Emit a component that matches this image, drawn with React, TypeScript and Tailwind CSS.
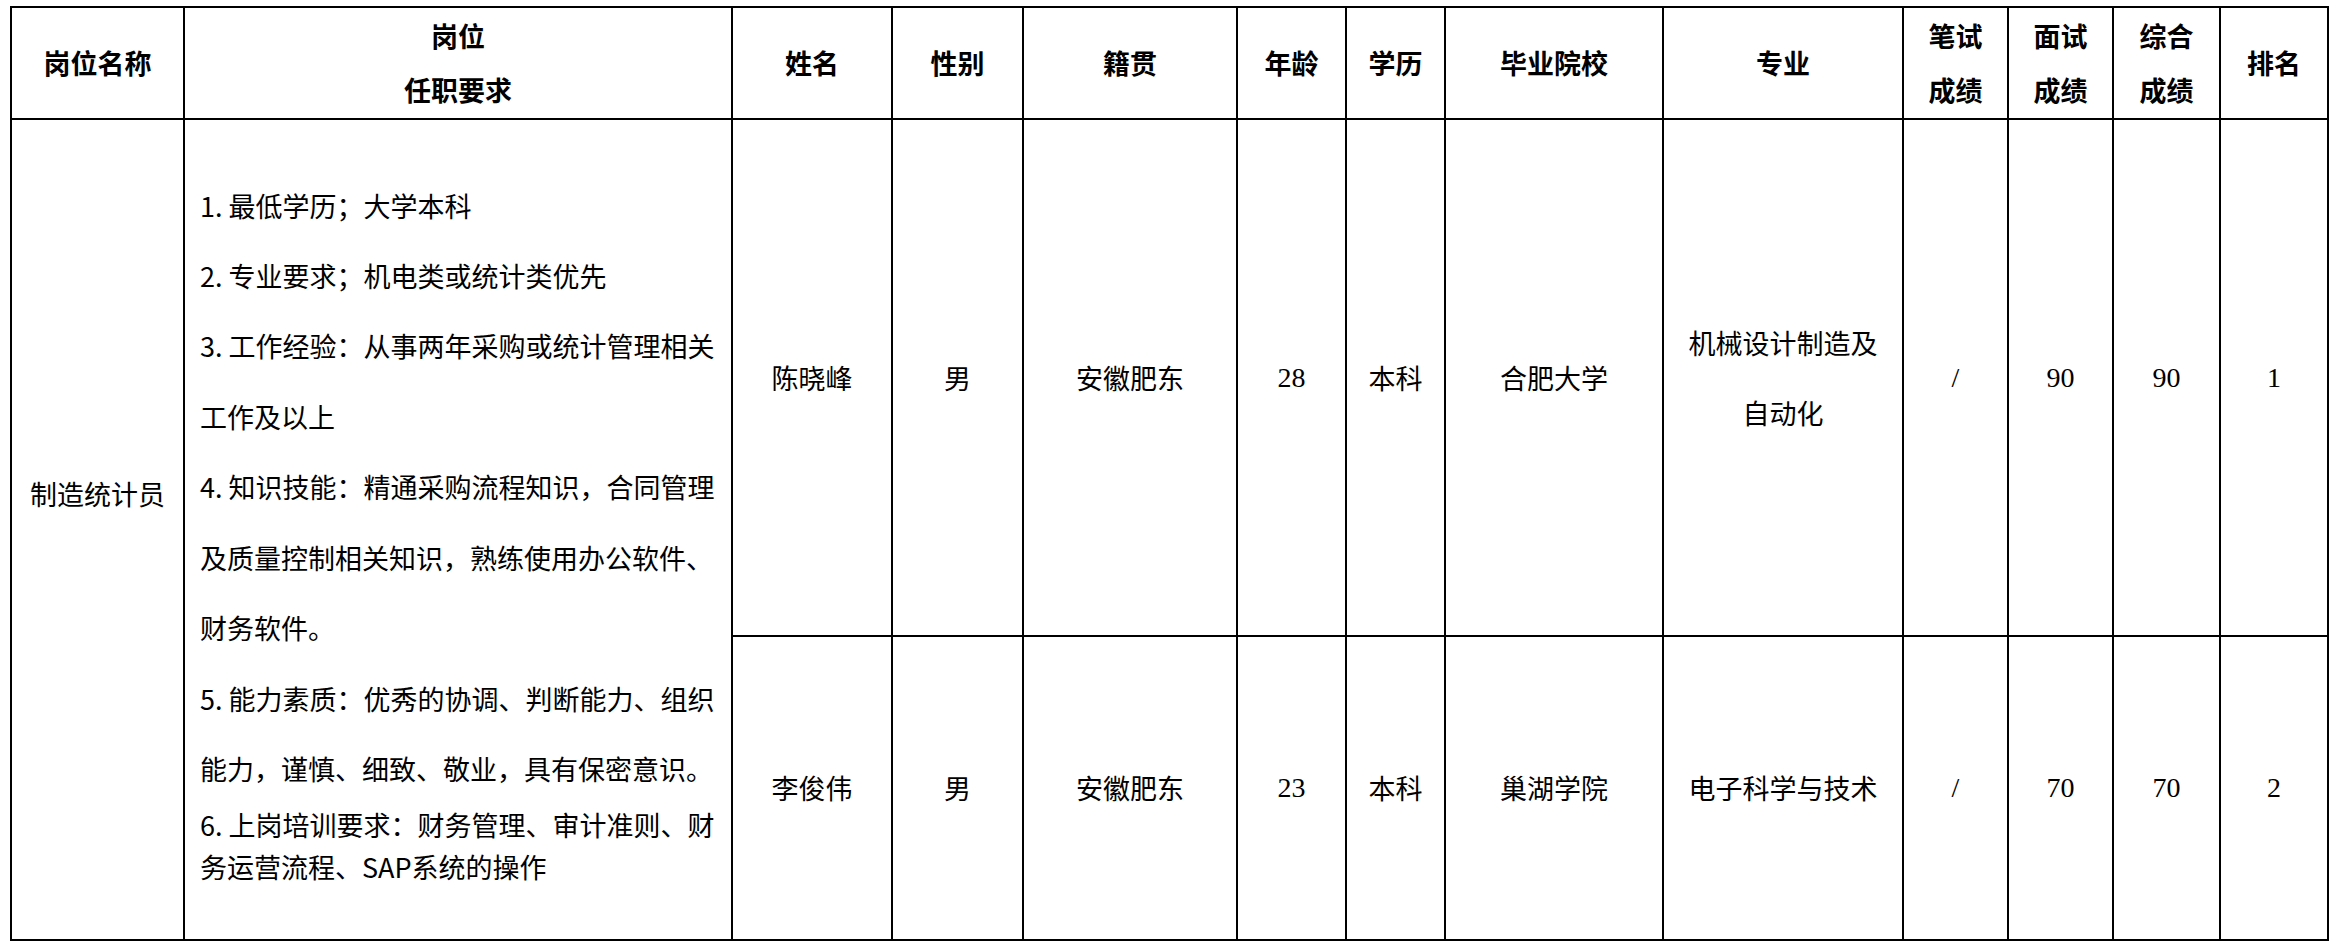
import React from "react";

const sans = "font-['Noto_Sans_CJK_SC','Noto_Sans',sans-serif]";
const serif = "font-['Liberation_Serif','Noto_Sans_CJK_SC',serif]";

function Cell({
  children,
  className = "",
}: {
  children?: React.ReactNode;
  className?: string;
}) {
  return (
    <div
      className={
        "border-r-2 border-b-2 border-black flex flex-col items-center justify-center text-center text-black " +
        className
      }
    >
      {children}
    </div>
  );
}

function Head({ lines }: { lines: string[] }) {
  return (
    <Cell className={sans + " font-bold text-[27px]"}>
      {lines.map((l, i) => (
        <div key={i} className="leading-[54px] whitespace-nowrap">
          {l}
        </div>
      ))}
    </Cell>
  );
}

function Txt({ lines, num = false }: { lines: string[]; num?: boolean }) {
  return (
    <Cell className={(num ? serif + " text-[28px]" : sans + " text-[27px]")}>
      {lines.map((l, i) => (
        <div key={i} className="leading-[70px] whitespace-nowrap">
          {l}
        </div>
      ))}
    </Cell>
  );
}

const reqMain = [
  "1. 最低学历；大学本科",
  "2. 专业要求；机电类或统计类优先",
  "3. 工作经验：从事两年采购或统计管理相关",
  "工作及以上",
  "4. 知识技能：精通采购流程知识，合同管理",
  "及质量控制相关知识，熟练使用办公软件、",
  "财务软件。",
  "5. 能力素质：优秀的协调、判断能力、组织",
  "能力，谨慎、细致、敬业，具有保密意识。",
];
const reqLast = ["6. 上岗培训要求：财务管理、审计准则、财", "务运营流程、SAP系统的操作"];

export default function App() {
  return (
    <div className="w-[2337px] h-[948px] bg-white overflow-hidden">
      <div className="pl-[10px] pt-[6px]">
        <div className="grid w-fit border-l-2 border-t-2 border-black grid-cols-[173px_548px_160px_131px_214px_109px_99px_218px_240px_105px_105px_107px_108px] grid-rows-[112px_517px_304px]">
          <Head lines={["岗位名称"]} />
          <Head lines={["岗位", "任职要求"]} />
          <Head lines={["姓名"]} />
          <Head lines={["性别"]} />
          <Head lines={["籍贯"]} />
          <Head lines={["年龄"]} />
          <Head lines={["学历"]} />
          <Head lines={["毕业院校"]} />
          <Head lines={["专业"]} />
          <Head lines={["笔试", "成绩"]} />
          <Head lines={["面试", "成绩"]} />
          <Head lines={["综合", "成绩"]} />
          <Head lines={["排名"]} />

          <Cell className={"row-span-2 pb-[72px] text-[27px] " + sans}>
            <div className="leading-[40px] whitespace-nowrap">制造统计员</div>
          </Cell>
          <div
            className={
              "row-span-2 border-r-2 border-b-2 border-black flex flex-col justify-center items-start pl-[15px] text-[27px] text-black " +
              sans
            }
          >
            {reqMain.map((l, i) => (
              <div key={i} className="leading-[70.4px] whitespace-nowrap">
                {l}
              </div>
            ))}
            {reqLast.map((l, i) => (
              <div key={"l" + i} className="leading-[42px] whitespace-nowrap">
                {l}
              </div>
            ))}
          </div>

          <Txt lines={["陈晓峰"]} />
          <Txt lines={["男"]} />
          <Txt lines={["安徽肥东"]} />
          <Txt lines={["28"]} num />
          <Txt lines={["本科"]} />
          <Txt lines={["合肥大学"]} />
          <Txt lines={["机械设计制造及", "自动化"]} />
          <Txt lines={["/"]} num />
          <Txt lines={["90"]} num />
          <Txt lines={["90"]} num />
          <Txt lines={["1"]} num />

          <Txt lines={["李俊伟"]} />
          <Txt lines={["男"]} />
          <Txt lines={["安徽肥东"]} />
          <Txt lines={["23"]} num />
          <Txt lines={["本科"]} />
          <Txt lines={["巢湖学院"]} />
          <Txt lines={["电子科学与技术"]} />
          <Txt lines={["/"]} num />
          <Txt lines={["70"]} num />
          <Txt lines={["70"]} num />
          <Txt lines={["2"]} num />
        </div>
      </div>
    </div>
  );
}
